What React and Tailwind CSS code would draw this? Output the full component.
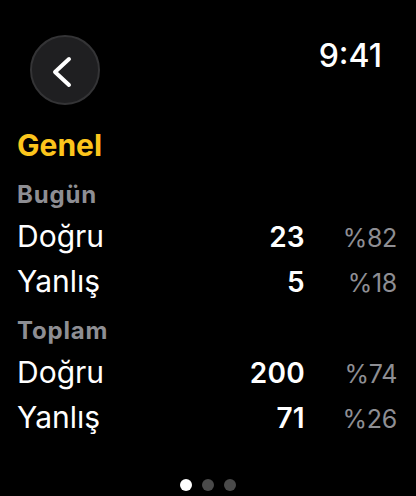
const SECTIONS = [
  {
    title: "Bugün",
    rows: [
      { label: "Doğru", value: 23, pct: 82 },
      { label: "Yanlış", value: 5, pct: 18 },
    ],
  },
  {
    title: "Toplam",
    rows: [
      { label: "Doğru", value: 200, pct: 74 },
      { label: "Yanlış", value: 71, pct: 26 },
    ],
  },
];

function StatRow({ label, value, pct }) {
  return (
    <div className="flex items-baseline h-[45px] leading-[45px]">
      <span className="text-white text-[30px]">{label}</span>
      <span className="flex-1 text-right text-white text-[28px] font-semibold tracking-[0.3px]">{value}</span>
      <span className="w-[92px] text-right text-[#8e8e93] text-[25px] tracking-[-0.3px]">%{pct}</span>
    </div>
  );
}

export default function App() {
  return (
    <div
      className="w-[416px] h-[496px] bg-black flex flex-col overflow-hidden"
      style={{ fontFamily: "Inter, 'Noto Sans', sans-serif" }}
    >
      {/* header: back button + clock */}
      <div className="flex justify-between items-start pt-[35px] pl-[30px] pr-[34px]">
        <button className="w-[70px] h-[70px] rounded-full bg-[#1f1f21] border-2 border-[#343436]">
          <svg width="66" height="66" viewBox="2 2 66 66" fill="none">
            <path d="M39 24 L25 37 L39 50" stroke="#fff" strokeWidth="4" strokeLinecap="round" strokeLinejoin="round" />
          </svg>
        </button>
        <span className="text-white text-[32px] leading-[38px] font-medium mt-[2px]">9:41</span>
      </div>

      <div className="pl-[17px] pr-[19px]">
        <h1 className="text-[30px] leading-[36px] font-bold text-[#fcc51c] mt-[22px]">Genel</h1>

        {SECTIONS.map((s, i) => (
          <div key={s.title} className={i === 0 ? "mt-[18px]" : "mt-[13px]"}>
            <div className="text-[24px] leading-[28px] font-bold tracking-[0.8px] text-[#8e8e93]">{s.title}</div>
            <div className="mt-[5px]">
              {s.rows.map(r => (
                <StatRow key={r.label} {...r} />
              ))}
            </div>
          </div>
        ))}
      </div>

      {/* page indicator */}
      <div className="mt-auto mb-[5px] flex justify-center gap-[10px]">
        <span className="w-[12px] h-[12px] rounded-full bg-white" />
        <span className="w-[12px] h-[12px] rounded-full bg-[#4a4a4a]" />
        <span className="w-[12px] h-[12px] rounded-full bg-[#4a4a4a]" />
      </div>
    </div>
  );
}
